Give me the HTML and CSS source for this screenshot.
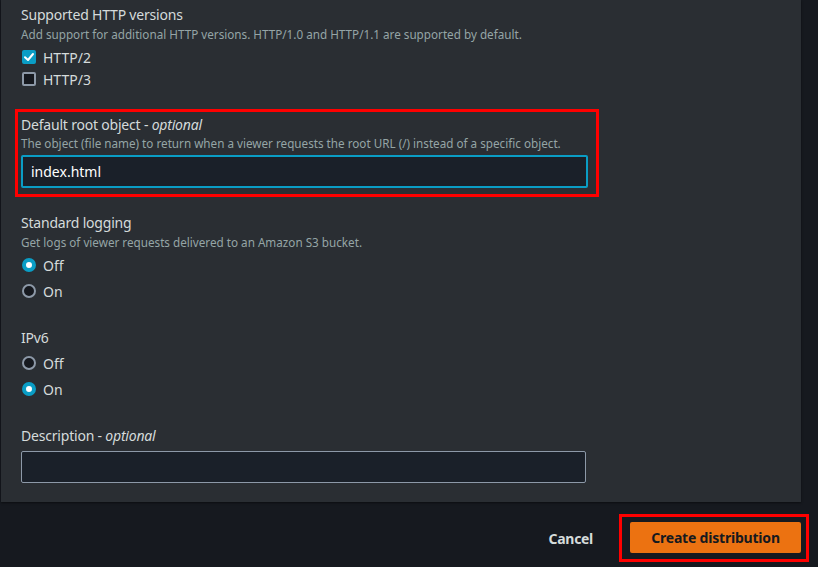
FILE: index.html
```html
<!DOCTYPE html>
<html>
<head>
<meta charset="utf-8">
<link rel="stylesheet" href="styles.css">
</head>
<body>
<div class="panel">
  <section class="field f-http">
    <div class="label">Supported HTTP versions</div>
    <div class="desc">Add support for additional HTTP versions. HTTP/1.0 and HTTP/1.1 are supported by default.</div>
    <div class="opts">
      <div class="opt check"><span class="box on"><svg viewBox="0 0 14 14" width="14" height="14"><path d="M3 7.2 L6 10 L11 4" fill="none" stroke="#fff" stroke-width="2" stroke-linecap="round" stroke-linejoin="round"/></svg></span>HTTP/2</div>
      <div class="opt check"><span class="box"></span>HTTP/3</div>
    </div>
  </section>

  <section class="highlight">
    <div class="field f-root">
      <div class="label">Default root object - <i>optional</i></div>
      <div class="desc">The object (file name) to return when a viewer requests the root URL (/) instead of a specific object.</div>
      <div class="input focus">index.html</div>
    </div>
  </section>

  <section class="field f-log">
    <div class="label">Standard logging</div>
    <div class="desc">Get logs of viewer requests delivered to an Amazon S3 bucket.</div>
    <div class="opts">
      <div class="opt radio"><span class="dot on"></span>Off</div>
      <div class="opt radio"><span class="dot"></span>On</div>
    </div>
  </section>

  <section class="field f-ipv6">
    <div class="label">IPv6</div>
    <div class="opts">
      <div class="opt radio"><span class="dot"></span>Off</div>
      <div class="opt radio"><span class="dot on"></span>On</div>
    </div>
  </section>

  <section class="field f-desc">
    <div class="label">Description - <i>optional</i></div>
    <div class="input plain"></div>
  </section>
</div>

<div class="footer">
  <button class="cancel">Cancel</button>
  <div class="btn-mark"><button class="primary">Create distribution</button></div>
</div>
</body>
</html>
```

FILE: styles.css
```css
* { box-sizing: border-box; }
html, body { margin: 0; padding: 0; }
body {
  background: #16191f;
  font-family: "Noto Sans", "Open Sans", sans-serif;
  color: #d5dbdb;
  width: 818px;
  height: 567px;
  overflow: hidden;
}
.panel {
  margin-left: 1px;
  width: 800px;
  height: 502px;
  background: #2a2e33;
  padding: 5px 0 0 20px;
  box-shadow: 0 1px 2px rgba(0,0,0,0.5);
}
.label {
  font-size: 14px;
  line-height: 20px;
  color: #d5dbdb;
  letter-spacing: -0.2px;
}
.label i { color: #d5dbdb; }
.desc {
  font-size: 11.7px;
  line-height: 16px;
  color: #95a5a6;
  margin-top: 1px;
}
.opts { display: flex; flex-direction: column; }
.opt {
  display: flex;
  align-items: center;
  font-size: 14px;
  color: #d5dbdb;
  gap: 7px;
  padding-left: 1px;
}
.check { height: 22px; }
.f-http .opts { margin-top: 4px; }
.box {
  width: 14px; height: 14px;
  border: 2px solid #8d99a8;
  border-radius: 2px;
  background: #16191f;
  display: flex; align-items: center; justify-content: center;
}
.box.on { background: #0a9dc5; border-color: #0a9dc5; }
.box svg { flex: none; }
.radio { height: 26px; }
.dot {
  width: 14px; height: 14px;
  border-radius: 50%;
  border: 2px solid #8d99a8;
  background: #16191f;
}
.dot.on {
  border: 4.5px solid #0a9dc5;
  background: #fff;
}
.highlight {
  margin: 19px 0 0 -6px;
  width: 584px;
  border: 3px solid #ff0000;
  padding: 3px 8px 6px 3px;
}
.f-root .desc { margin-top: 0; }
.input {
  margin-top: 4px;
  height: 33px;
  width: 567px;
  background: #1a2029;
  border-radius: 2px;
  font-size: 14px;
  line-height: 29px;
  padding: 0 8px;
  color: #ffffff;
}
.input.focus { border: 2px solid #0a9dc5; }
.f-log { margin-top: 16px; }
.f-log .opts { margin-top: 2px; }
.f-ipv6 { margin-top: 24px; }
.f-ipv6 .opts { margin-top: 2px; }
.f-desc { margin-top: 24px; }
.input.plain {
  margin-top: 5px;
  height: 32px;
  width: 565px;
  border: 1px solid #8d99a8;
}
.footer {
  display: flex;
  justify-content: flex-end;
  align-items: center;
  padding: 12px 9px 0 0;
  gap: 26px;
}
.cancel {
  background: none;
  border: none;
  font-family: inherit;
  font-weight: 700;
  font-size: 14px;
  letter-spacing: -0.3px;
  color: #d5dbdb;
  padding: 0;
}
.btn-mark {
  border: 3px solid #ff0000;
  padding: 5px 5px 6px 8px;
}
.primary {
  display: block;
  width: 171px;
  height: 31px;
  background: #ec7211;
  border: none;
  border-radius: 2px;
  font-family: inherit;
  font-weight: 700;
  font-size: 14px;
  letter-spacing: -0.2px;
  color: #16191f;
  padding: 0;
}
```
